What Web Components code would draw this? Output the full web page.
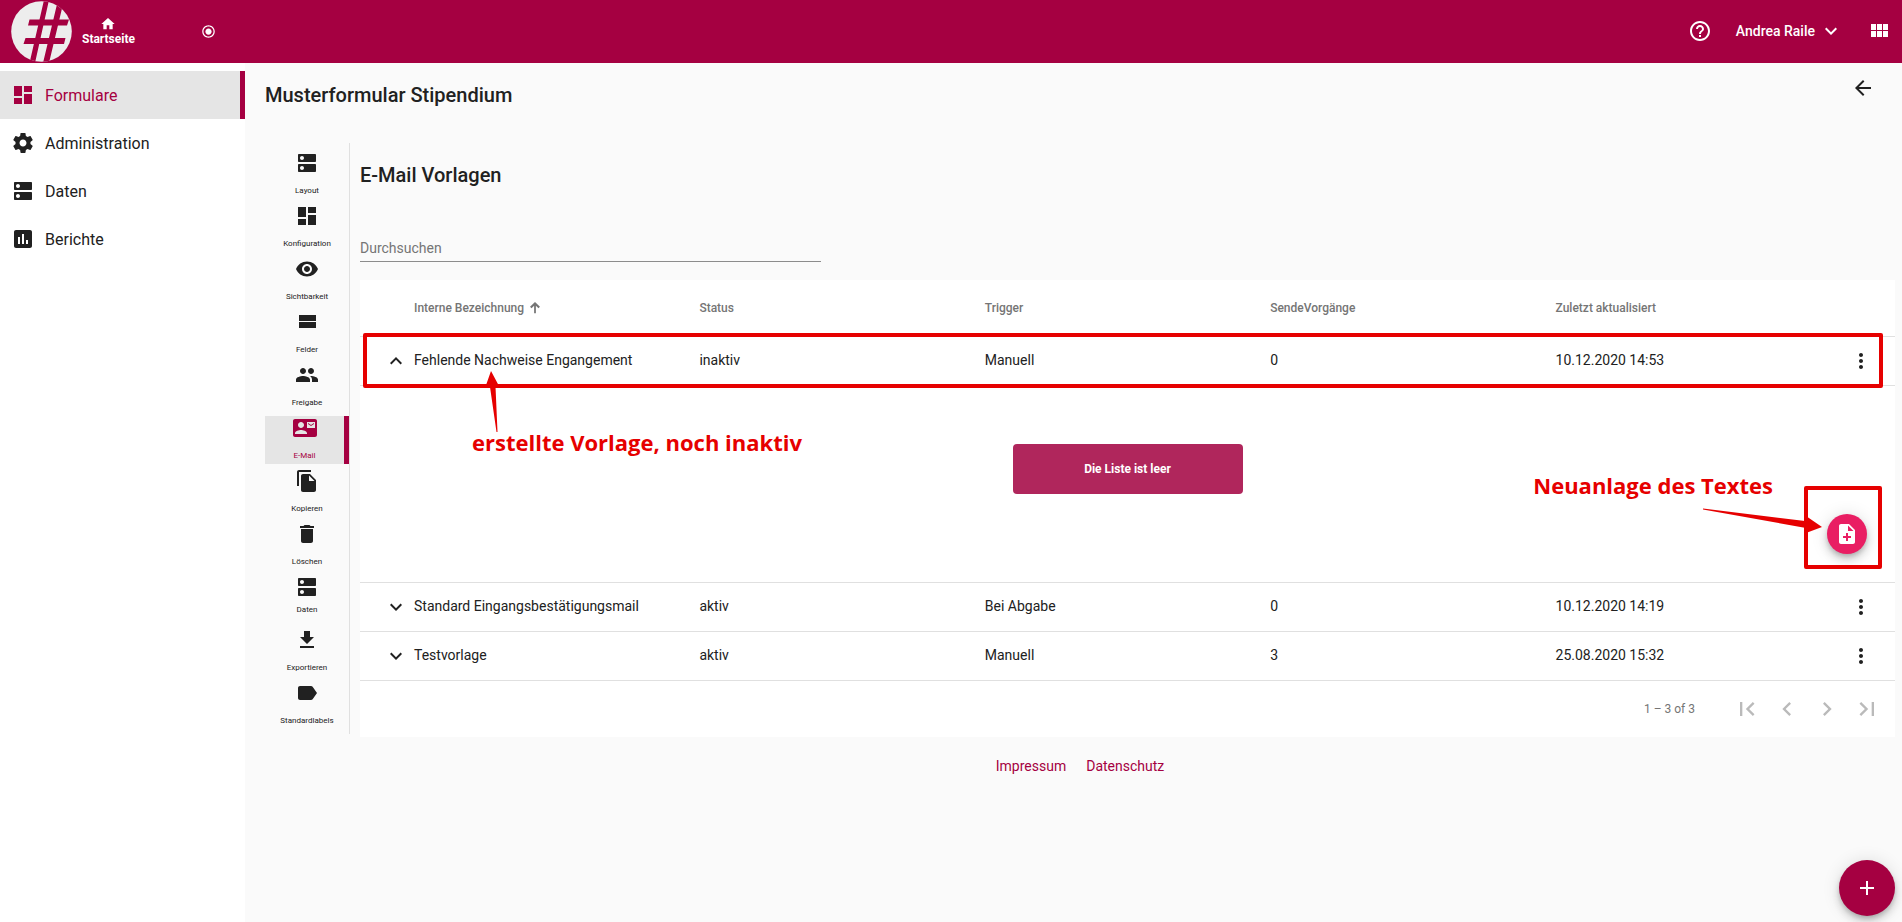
<!DOCTYPE html>
<html lang="de">
<head>
<meta charset="utf-8">
<meta name="viewport" content="width=device-width, initial-scale=1">
<title>Musterformular Stipendium</title>
<style>
  :root {
    --brand: #a50041;
    --accent: #e91e63;
    --ink: #212121;
    --muted: #757575;
    --line: #e0e0e0;
    --active: #e5e5e5;
    --mark: #e60000;
  }
  html, body { height: 100%; }
  body { margin: 0; background: #fafafa; color: var(--ink); font: 400 14px/20px Roboto, sans-serif; }
</style>
</head>
<body>
<app-shell>
  <app-header slot="header" user="Andrea Raile"></app-header>
  <side-nav slot="nav">
    <nav-item icon="dashboard" active>Formulare</nav-item>
    <nav-item icon="settings">Administration</nav-item>
    <nav-item icon="dns">Daten</nav-item>
    <nav-item icon="chart">Berichte</nav-item>
  </side-nav>
  <form-page heading="Musterformular Stipendium">
    <tool-rail slot="rail">
      <tool-item icon="dns">Layout</tool-item>
      <tool-item icon="dashboard">Konfiguration</tool-item>
      <tool-item icon="eye">Sichtbarkeit</tool-item>
      <tool-item icon="stream">Felder</tool-item>
      <tool-item icon="people">Freigabe</tool-item>
      <tool-item icon="contact" active>E-Mail</tool-item>
      <tool-item icon="copy">Kopieren</tool-item>
      <tool-item icon="delete">Löschen</tool-item>
      <tool-item icon="dns" compact>Daten</tool-item>
      <tool-item icon="download">Exportieren</tool-item>
      <tool-item icon="label">Standardlabels</tool-item>
    </tool-rail>
    <template-list heading="E-Mail Vorlagen"></template-list>
    <page-footer slot="footer"></page-footer>
  </form-page>
  <round-button slot="fab" icon="add" label="Hinzufügen" large></round-button>
</app-shell>

<script>
const ICONS = {
  home: 'M10 20v-6h4v6h5v-8h3L12 3 2 12h3v8z',
  radio: 'M12 7c-2.76 0-5 2.24-5 5s2.24 5 5 5 5-2.24 5-5-2.24-5-5-5zm0-5C6.48 2 2 6.48 2 12s4.48 10 10 10 10-4.48 10-10S17.52 2 12 2zm0 18c-4.42 0-8-3.58-8-8s3.58-8 8-8 8 3.58 8 8-3.58 8-8 8z',
  help: 'M11 18h2v-2h-2v2zm1-16C6.48 2 2 6.48 2 12s4.48 10 10 10 10-4.48 10-10S17.52 2 12 2zm0 18c-4.41 0-8-3.59-8-8s3.59-8 8-8 8 3.59 8 8-3.59 8-8 8zm0-14c-2.21 0-4 1.79-4 4h2c0-1.1.9-2 2-2s2 .9 2 2c0 2-3 1.75-3 5h2c0-2.25 3-2.5 3-5 0-2.21-1.79-4-4-4z',
  down: 'M16.59 8.59L12 13.17 7.41 8.59 6 10l6 6 6-6z',
  up: 'M12 8l-6 6 1.41 1.41L12 10.83l4.59 4.58L18 14z',
  modules: 'M4 11h5V5H4v6zm0 7h5v-6H4v6zm6 0h5v-6h-5v6zm6 0h5v-6h-5v6zm-6-7h5V5h-5v6zm6-6v6h5V5h-5z',
  back: 'M20 11H7.83l5.59-5.59L12 4l-8 8 8 8 1.41-1.41L7.83 13H20v-2z',
  dashboard: 'M3 13h8V3H3v10zm0 8h8v-6H3v6zm10 0h8V11h-8v10zm0-18v6h8V3h-8z',
  settings: 'M19.43 12.98c.04-.32.07-.64.07-.98s-.03-.66-.07-.98l2.11-1.65c.19-.15.24-.42.12-.64l-2-3.46c-.12-.22-.39-.3-.61-.22l-2.49 1c-.52-.4-1.08-.73-1.69-.98l-.38-2.65C14.46 2.18 14.25 2 14 2h-4c-.25 0-.46.18-.49.42l-.38 2.65c-.61.25-1.17.59-1.69.98l-2.49-1c-.23-.09-.49 0-.61.22l-2 3.46c-.13.22-.07.49.12.64l2.11 1.65c-.04.32-.07.65-.07.98s.03.66.07.98l-2.11 1.65c-.19.15-.24.42-.12.64l2 3.46c.12.22.39.3.61.22l2.49-1c.52.4 1.08.73 1.69.98l.38 2.65c.03.24.24.42.49.42h4c.25 0 .46-.18.49-.42l.38-2.65c.61-.25 1.17-.59 1.69-.98l2.49 1c.23.09.49 0 .61-.22l2-3.46c.12-.22.07-.49-.12-.64l-2.11-1.65zM12 15.5c-1.93 0-3.5-1.57-3.5-3.5s1.57-3.5 3.5-3.5 3.5 1.57 3.5 3.5-1.57 3.5-3.5 3.5z',
  dns: 'M20 13H4c-.55 0-1 .45-1 1v6c0 .55.45 1 1 1h16c.55 0 1-.45 1-1v-6c0-.55-.45-1-1-1zM7 19c-1.1 0-2-.9-2-2s.9-2 2-2 2 .9 2 2-.9 2-2 2zM20 3H4c-.55 0-1 .45-1 1v6c0 .55.45 1 1 1h16c.55 0 1-.45 1-1V4c0-.55-.45-1-1-1zM7 9c-1.1 0-2-.9-2-2s.9-2 2-2 2 .9 2 2-.9 2-2 2z',
  chart: 'M19 3H5c-1.1 0-2 .9-2 2v14c0 1.1.9 2 2 2h14c1.1 0 2-.9 2-2V5c0-1.1-.9-2-2-2zM9 17H7v-7h2v7zm4 0h-2V7h2v10zm4 0h-2v-4h2v4z',
  eye: 'M12 4.5C7 4.5 2.73 7.61 1 12c1.73 4.39 6 7.5 11 7.5s9.27-3.11 11-7.5c-1.73-4.39-6-7.5-11-7.5zM12 17c-2.76 0-5-2.24-5-5s2.24-5 5-5 5 2.24 5 5-2.24 5-5 5zm0-8c-1.66 0-3 1.34-3 3s1.34 3 3 3 3-1.34 3-3-1.34-3-3-3z',
  stream: 'M4 18h17v-6H4v6zM4 5v6h17V5H4z',
  people: 'M16 11c1.66 0 2.99-1.34 2.99-3S17.66 5 16 5c-1.66 0-3 1.34-3 3s1.34 3 3 3zm-8 0c1.66 0 2.99-1.34 2.99-3S9.66 5 8 5C6.34 5 5 6.34 5 8s1.34 3 3 3zm0 2c-2.33 0-7 1.17-7 3.5V19h14v-2.5c0-2.33-4.67-3.5-7-3.5zm8 0c-.29 0-.62.02-.97.05 1.16.84 1.97 1.97 1.97 3.45V19h6v-2.5c0-2.33-4.67-3.5-7-3.5z',
  contact: 'M21 8V7l-3 2-3-2v1l3 2 3-2zm1-5H2C.9 3 0 3.9 0 5v14c0 1.1.9 2 2 2h20c1.1 0 1.99-.9 1.99-2L24 5c0-1.1-.9-2-2-2zM8 6c1.66 0 3 1.34 3 3s-1.34 3-3 3-3-1.34-3-3 1.34-3 3-3zm6 12H2v-1c0-2 4-3.1 6-3.1s6 1.1 6 3.1v1zm8-6h-8V6h8v6z',
  copy: 'M16 1H4c-1.1 0-2 .9-2 2v14h2V3h12V1zm-1 4l6 6v10c0 1.1-.9 2-2 2H7.99C6.89 23 6 22.1 6 21l.01-14c0-1.1.89-2 1.99-2h7zm-1 7h5.5L14 6.5V12z',
  delete: 'M6 19c0 1.1.9 2 2 2h8c1.1 0 2-.9 2-2V7H6v12zM19 4h-3.5l-1-1h-5l-1 1H5v2h14V4z',
  download: 'M19 9h-4V3H9v6H5l7 7 7-7zM5 18v2h14v-2H5z',
  label: 'M17.63 5.84C17.27 5.33 16.67 5 16 5L5 5.01C3.9 5.01 3 5.9 3 7v10c0 1.1.9 1.99 2 1.99L16 19c.67 0 1.27-.33 1.63-.84L22 12l-4.37-6.16z',
  more: 'M12 8c1.1 0 2-.9 2-2s-.9-2-2-2-2 .9-2 2 .9 2 2 2zm0 2c-1.1 0-2 .9-2 2s.9 2 2 2 2-.9 2-2-.9-2-2-2zm0 6c-1.1 0-2 .9-2 2s.9 2 2 2 2-.9 2-2-.9-2-2-2z',
  noteadd: 'M14 2H6c-1.1 0-1.99.9-1.99 2L4 20c0 1.1.89 2 1.99 2H18c1.1 0 2-.9 2-2V8l-6-6zm2 14h-3v3h-2v-3H8v-2h3v-3h2v3h3v2zm-3-7V3.5L18.5 9H13z',
  add: 'M19 13h-6v6h-2v-6H5v-2h6V5h2v6h6v2z',
  sort: 'M10.500 21V8L6 12.500 3.500 10 12 1.500l8.500 8.500-2.500 2.500L13.500 8V21z',
  first: 'M18.41 16.59L13.82 12l4.59-4.59L17 6l-6 6 6 6zM6 6h2v12H6z',
  prev: 'M15.41 7.41L14 6l-6 6 6 6 1.41-1.41L10.83 12z',
  next: 'M10 6L8.59 7.41 13.17 12l-4.58 4.59L10 18l6-6z',
  last: 'M5.59 7.41L10.18 12l-4.59 4.59L7 18l6-6-6-6zM16 6h2v12h-2z'
};

const BASE = `
  :host, *, *::before { box-sizing: border-box; }
  button { all: unset; box-sizing: border-box; cursor: pointer; display: inline-flex; align-items: center; justify-content: center; }
  a { color: inherit; text-decoration: none; }
  h1, h2 { margin: 0; font-size: 20px; font-weight: 500; }
`;

/* Shared base: renders markup and styles into an open shadow root. */
class Element extends HTMLElement {
  connectedCallback() {
    if (this.shadowRoot) return;
    const template = document.createElement('template');
    template.innerHTML = `<style>${BASE}${this.styles()}</style>${this.markup()}`;
    this.attachShadow({ mode: 'open' }).append(template.content.cloneNode(true));
  }
  styles() { return ''; }
  attr(name) { return this.getAttribute(name) || ''; }
}

customElements.define('m-icon', class extends Element {
  styles() {
    const size = this.attr('size') || '24';
    return `:host { display: block; flex: none; width: ${size}px; height: ${size}px; }
      svg { display: block; width: 100%; height: 100%; fill: currentColor; }`;
  }
  markup() { return `<svg viewBox="0 0 24 24" aria-hidden="true"><path d="${ICONS[this.attr('name')]}"/></svg>`; }
});

customElements.define('app-shell', class extends Element {
  styles() {
    return `:host { display: grid; grid-template: auto 1fr / 245px minmax(0, 1fr); min-height: 100%; }
      header { grid-column: 1 / -1; }
      aside { background: #fff; }
      .fab { position: fixed; right: 7px; bottom: 6px; }`;
  }
  markup() {
    return `<header><slot name="header"></slot></header>
      <aside><slot name="nav"></slot></aside>
      <main><slot></slot></main>
      <div class="fab"><slot name="fab"></slot></div>`;
  }
});

customElements.define('app-header', class extends Element {
  styles() {
    return `:host { display: flex; align-items: center; height: 63px; padding: 0 11px 1px; background: var(--brand); color: #fff; font-weight: 500; }
      .logo { width: 61px; height: 61px; display: block; }
      .logo svg { display: block; }
      .home { display: flex; flex-direction: column; align-items: center; margin-left: 10px; font-size: 12px; line-height: 14px; font-weight: 700; }
      .radio { margin-left: 66px; }
      .right { margin-left: auto; display: flex; align-items: center; }
      .user { gap: 4px; margin: 0 24px 0 24px; }`;
  }
  markup() {
    return `<a class="logo" href="#" aria-label="Logo">
        <svg width="61" height="61" viewBox="0 0 61 61">
          <defs><clipPath id="disc"><circle cx="30.5" cy="30.5" r="30.3"/></clipPath></defs>
          <circle cx="30.5" cy="30.5" r="30.3" fill="#ededed"/>
          <g clip-path="url(#disc)" fill="var(--brand)">
            <path d="M33 -1h5L24 62h-5.500zM47 -1h6L38 62h-6z"/>
            <path d="M18.500 18.500h39.500l-2 6H17zM14.500 37h40l-1.500 6H12.500z"/>
          </g>
        </svg></a>
      <a class="home" href="#"><m-icon name="home" size="16"></m-icon>Startseite</a>
      <button class="radio" aria-label="Status"><m-icon name="radio" size="15"></m-icon></button>
      <div class="right">
        <button aria-label="Hilfe"><m-icon name="help"></m-icon></button>
        <button class="user">${this.attr('user')}<m-icon name="down"></m-icon></button>
        <button aria-label="Module"><m-icon name="modules"></m-icon></button>
      </div>`;
  }
});

customElements.define('side-nav', class extends Element {
  styles() { return `:host { display: block; padding-top: 8px; }`; }
  markup() { return `<nav aria-label="Hauptmenü"><slot></slot></nav>`; }
});

customElements.define('nav-item', class extends Element {
  styles() {
    return `:host { display: block; font-size: 16px; }
      a { display: flex; align-items: center; gap: 10px; height: 48px; padding-left: 11px; border-right: 5px solid transparent; }
      span { padding-top: 2px; }
      :host([active]) a { background: var(--active); border-color: var(--brand); color: var(--brand); }`;
  }
  markup() { return `<a href="#"><m-icon name="${this.attr('icon')}"></m-icon><span><slot></slot></span></a>`; }
});

customElements.define('form-page', class extends Element {
  styles() {
    return `:host { display: block; padding: 12px 7px 20px 20px; }
      .title { display: flex; justify-content: space-between; align-items: flex-start; margin-bottom: 28px; }
      .title h1 { line-height: 40px; }
      .title button { height: 26px; margin-right: 20px; }
      .body { display: flex; align-items: flex-start; gap: 10px; }
      .content { flex: 1; min-width: 0; }
      .footer { margin-top: 19px; }`;
  }
  markup() {
    return `<div class="title"><h1>${this.attr('heading')}</h1>
        <button aria-label="Zurück"><m-icon name="back"></m-icon></button></div>
      <div class="body"><slot name="rail"></slot><div class="content"><slot></slot></div></div>
      <div class="footer"><slot name="footer"></slot></div>`;
  }
});

customElements.define('tool-rail', class extends Element {
  styles() {
    return `:host { display: block; flex: none; width: 85px; padding-top: 8px; border-right: 1px solid var(--line); }`;
  }
  markup() { return `<nav aria-label="Formularwerkzeuge"><slot></slot></nav>`; }
});

customElements.define('tool-item', class extends Element {
  styles() {
    return `:host { display: block; padding-bottom: 5px; font-size: 8px; line-height: 16px; }
      a { display: flex; flex-direction: column; align-items: center; gap: 8px; height: 48px; }
      :host([compact]) a { gap: 3px; }
      :host([active]) a { background: var(--active); border-right: 5px solid var(--brand); color: var(--brand); }`;
  }
  markup() { return `<a href="#"><m-icon name="${this.attr('icon')}"></m-icon><span><slot></slot></span></a>`; }
});

customElements.define('round-button', class extends Element {
  styles() {
    return `:host { display: block; --size: 40px; --fill: var(--accent); }
      :host([large]) { --size: 56px; --fill: var(--brand); }
      button { display: flex; width: var(--size); height: var(--size); border-radius: 50%; background: var(--fill); color: #fff;
        box-shadow: 0 3px 5px -1px rgba(0,0,0,.2), 0 6px 10px 0 rgba(0,0,0,.14), 0 1px 18px 0 rgba(0,0,0,.12); }`;
  }
  markup() { return `<button aria-label="${this.attr('label')}"><m-icon name="${this.attr('icon')}"></m-icon></button>`; }
});

customElements.define('template-list', class extends Element {
  styles() {
    return `:host { display: block; padding-top: 16px; }
      h2 { line-height: 32px; margin-bottom: 44px; }
      input { display: block; width: 30%; height: 27px; padding: 0; border: 0; border-bottom: 1px solid #8c8c8c; border-radius: 0;
        background: none; font: inherit; color: inherit; outline: 0; }
      input::placeholder { color: var(--muted); opacity: 1; }
      .card { position: relative; margin-top: 18px; background: #fff; }
      table { width: 100%; table-layout: fixed; border-collapse: separate; border-spacing: 0; }
      .edge { width: 54px; }
      th, td { padding: 0; text-align: left; border-bottom: 1px solid var(--line); }
      th { height: 57px; font-size: 12px; font-weight: 500; color: var(--muted); }
      td { height: 49px; }
      .text { padding-bottom: 2px; }
      th span { display: inline-flex; align-items: center; gap: 4px; }
      .icon { display: flex; width: 24px; }
      .toggle { margin-left: 24px; }
      .menu { margin-left: 8px; }
      .detail { display: flex; flex-direction: column; padding: 58px 28px 28px; gap: 20px; }
      .empty { align-self: center; width: 230px; height: 50px; border-radius: 4px; background: #b0265c; color: #fff; font-size: 12px; font-weight: 700; }
      .detail round-button { align-self: flex-end; }
      .pager { display: flex; align-items: center; justify-content: flex-end; height: 56px; padding-right: 8px; font-size: 12px; color: var(--muted); }
      .pager span { margin-right: 32px; }
      .pager button { width: 40px; height: 40px; color: #bababa; }`;
  }
  row(cells, icon) {
    return `<tr><td><button class="icon toggle" aria-label="Details"><m-icon name="${icon}"></m-icon></button></td>
      ${cells.map(text => `<td class="text">${text}</td>`).join('')}
      <td><button class="icon menu" aria-label="Aktionen"><m-icon name="more"></m-icon></button></td></tr>`;
  }
  markup() {
    return `<h2>${this.attr('heading')}</h2>
      <input type="text" placeholder="Durchsuchen" aria-label="Durchsuchen">
      <div class="card">
        <table>
          <thead><tr><th class="edge"></th><th><span>Interne Bezeichnung<m-icon name="sort" size="14"></m-icon></span></th>
            <th>Status</th><th>Trigger</th><th>SendeVorgänge</th><th>Zuletzt aktualisiert</th><th class="edge"></th></tr></thead>
          <tbody>
            ${this.row(['Fehlende Nachweise Engangement', 'inaktiv', 'Manuell', '0', '10.12.2020 14:53'], 'up')}
            <tr><td colspan="7"><div class="detail"><button class="empty">Die Liste ist leer</button>
              <round-button icon="noteadd" label="Text anlegen"></round-button></div></td></tr>
            ${this.row(['Standard Eingangsbestätigungsmail', 'aktiv', 'Bei Abgabe', '0', '10.12.2020 14:19'], 'down')}
            ${this.row(['Testvorlage', 'aktiv', 'Manuell', '3', '25.08.2020 15:32'], 'down')}
          </tbody>
        </table>
        <div class="pager"><span>1 – 3 of 3</span>
          <button aria-label="Erste Seite"><m-icon name="first" size="28"></m-icon></button>
          <button aria-label="Vorherige Seite"><m-icon name="prev" size="28"></m-icon></button>
          <button aria-label="Nächste Seite"><m-icon name="next" size="28"></m-icon></button>
          <button aria-label="Letzte Seite"><m-icon name="last" size="28"></m-icon></button>
        </div>
        <list-notes></list-notes>
      </div>`;
  }
});

/* Red explanatory marks laid over the table. */
customElements.define('list-notes', class extends Element {
  styles() {
    return `:host { position: absolute; inset: 0; pointer-events: none; color: var(--mark); font: 700 22px/28px "Open Sans", "Noto Sans", sans-serif; white-space: nowrap; }
      .box { position: absolute; border: 4px solid var(--mark); border-radius: 2px; }
      .row { left: 3px; right: 12px; top: 53px; height: 55px; }
      .new { right: 13px; top: 206px; width: 78px; height: 83px; }
      span, svg { position: absolute; }
      svg { fill: var(--mark); }
      .a { left: 112px; top: 148px; }
      .b { right: 122px; top: 191px; }
      .arrow-a { left: 124px; top: 91px; }
      .arrow-b { right: 71px; top: 226px; }`;
  }
  markup() {
    return `<div class="box row"></div><div class="box new"></div>
      <svg class="arrow-a" width="16" height="62"><path d="M7 0L15 15 11.500 15.500 13.500 61 12.500 61 6 16 1 17z"/></svg>
      <span class="a">erstellte Vorlage, noch inaktiv</span>
      <svg class="arrow-b" width="122" height="30"><path d="M1 2.500L103 15 104 10 120 21 104 27 104 22 1 3.500z"/></svg>
      <span class="b">Neuanlage des Textes</span>`;
  }
});

customElements.define('page-footer', class extends Element {
  styles() { return `:host { display: flex; justify-content: center; gap: 20px; color: var(--brand); }`; }
  markup() { return `<a href="#">Impressum</a><a href="#">Datenschutz</a>`; }
});
</script>
</body>
</html>
